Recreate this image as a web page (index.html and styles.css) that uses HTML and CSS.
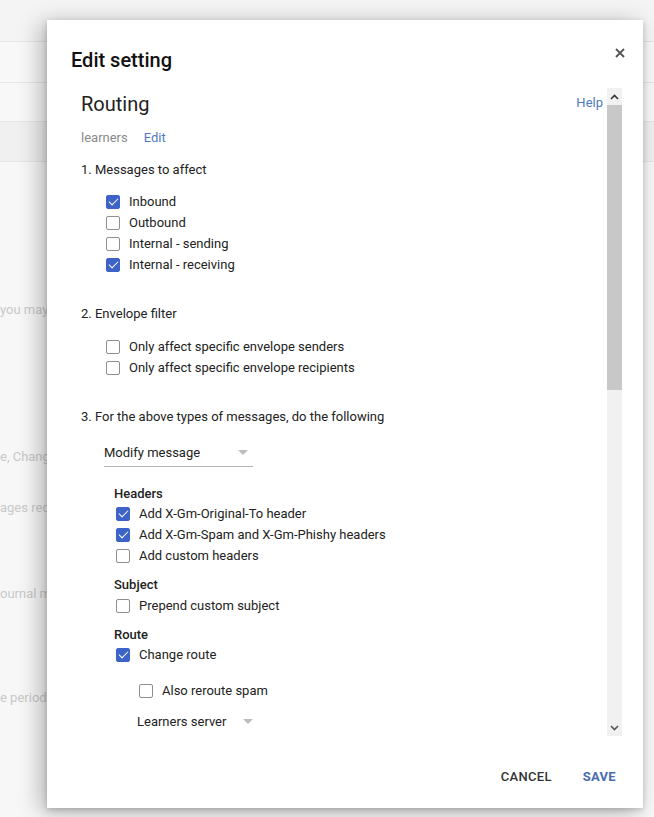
FILE: index.html
```html
<!DOCTYPE html>
<html>
<head>
<meta charset="utf-8">
<link rel="stylesheet" href="styles.css">
</head>
<body>
<div class="page">
  <div class="bg-row bg-top"></div>
  <div class="bg-row bg-line"></div>
  <div class="bg-row bg-line"></div>
  <div class="bg-row bg-band"></div>
  <div class="bg-text t1">you may</div>
  <div class="bg-text t2">e, Change</div>
  <div class="bg-text t3">ages rece</div>
  <div class="bg-text t4">ournal m</div>
  <div class="bg-text t5">e periodic</div>
</div>

<div class="dialog">
  <div class="dlg-head">
    <h1 class="dlg-title">Edit setting</h1>
    <svg class="close" width="10" height="10" viewBox="0 0 10 10"><path d="M1 1L9 9M9 1L1 9" stroke="#555" stroke-width="1.8"/></svg>
  </div>
  <div class="dlg-body">
    <div class="content">
      <div class="title-row">
        <h2 class="section-title">Routing</h2>
        <a class="link help">Help</a>
      </div>
      <div class="meta"><span class="muted">learners</span><a class="link">Edit</a></div>

      <div class="step s1">1. Messages to affect</div>
      <div class="checks c1">
        <label class="row"><span class="cb on"></span>Inbound</label>
        <label class="row"><span class="cb"></span>Outbound</label>
        <label class="row"><span class="cb"></span>Internal - sending</label>
        <label class="row"><span class="cb on"></span>Internal - receiving</label>
      </div>

      <div class="step s2">2. Envelope filter</div>
      <div class="checks c2">
        <label class="row"><span class="cb"></span>Only affect specific envelope senders</label>
        <label class="row"><span class="cb"></span>Only affect specific envelope recipients</label>
      </div>

      <div class="step s3">3. For the above types of messages, do the following</div>
      <div class="select modify"><span>Modify message</span><span class="caret"></span></div>

      <div class="sub">
        <div class="sub-h sh1">Headers</div>
        <label class="row"><span class="cb on"></span>Add X-Gm-Original-To header</label>
        <label class="row"><span class="cb on"></span>Add X-Gm-Spam and X-Gm-Phishy headers</label>
        <label class="row"><span class="cb"></span>Add custom headers</label>
        <div class="sub-h sh2">Subject</div>
        <label class="row"><span class="cb"></span>Prepend custom subject</label>
        <div class="sub-h sh2 sh-route">Route</div>
        <label class="row"><span class="cb on"></span>Change route</label>
        <label class="row nested"><span class="cb"></span>Also reroute spam</label>
        <div class="select server"><span>Learners server</span><span class="caret"></span></div>
      </div>
    </div>
    <div class="scrollbar">
      <div class="sb-btn"><svg width="9" height="6" viewBox="0 0 9 6"><path d="M1 5L4.5 1.5L8 5" fill="none" stroke="#333" stroke-width="1.6"/></svg></div>
      <div class="sb-thumb"></div>
      <div class="sb-track"></div>
      <div class="sb-btn"><svg width="9" height="6" viewBox="0 0 9 6"><path d="M1 1L4.5 4.5L8 1" fill="none" stroke="#555" stroke-width="1.6"/></svg></div>
    </div>
  </div>
  <div class="dlg-foot">
    <button class="btn cancel">CANCEL</button>
    <button class="btn save">SAVE</button>
  </div>
</div>
</body>
</html>
```

FILE: styles.css
```css
* { box-sizing: border-box; }
html, body { margin: 0; padding: 0; }
body {
  width: 654px;
  height: 817px;
  overflow: hidden;
  background: #f7f7f7;
  font-family: Roboto, "Liberation Sans", Arial, sans-serif;
  font-size: 13px;
  color: #222;
  position: relative;
}

/* background page */
.page { display: flex; flex-direction: column; }
.bg-row { border-bottom: 1px solid #e6e6e6; }
.bg-top { height: 42px; background: #f4f4f4; }
.bg-line { height: 41px; background: #f8f8f8; }
.bg-line + .bg-line { height: 39px; }
.bg-band { height: 40px; background: #f0f0f0; }
.bg-text {
  white-space: nowrap;
  color: #c9c9c9;
  font-size: 13px;
  line-height: 18px;
}
.t1 { margin-top: 139px; }
.t2 { margin-top: 129px; }
.t3 { margin-top: 33px; }
.t4 { margin-top: 68px; }
.t5 { margin-top: 86px; }

/* dialog */
.dialog {
  position: absolute;
  left: 47px;
  top: 20px;
  width: 596px;
  height: 788px;
  background: #fff;
  box-shadow: -6px 4px 22px rgba(0,0,0,0.28), 0 2px 6px rgba(0,0,0,0.18);
  display: flex;
  flex-direction: column;
}
.dlg-head {
  height: 68px;
  display: flex;
  justify-content: space-between;
  align-items: flex-start;
  padding: 28px 18px 0 24px;
}
.dlg-title {
  margin: 0;
  font-size: 20px;
  line-height: 24px;
  font-weight: 500;
  color: #111;
}

.dlg-body {
  flex: 0 0 648px;
  display: flex;
  margin: 0 21px 0 24px;
  overflow: hidden;
}
.content {
  flex: 1;
  padding: 4px 4px 0 10px;
  overflow: hidden;
}
.title-row {
  display: flex;
  justify-content: space-between;
  align-items: flex-start;
}
.section-title {
  margin: 0;
  font-size: 20px;
  line-height: 24px;
  font-weight: 400;
  color: #222;
}
.link { color: #4f7ac0; text-decoration: none; }
.help { font-size: 13px; line-height: 20px; margin-top: 1px; }
.meta { margin-top: 11px; line-height: 21px; display: flex; gap: 16px; }
.muted { color: #8a8a8a; }

.step { line-height: 21px; color: #222; }
.s1 { margin-top: 11px; }
.s2 { margin-top: 28px; }
.s3 { margin-top: 28px; }
.checks { padding-left: 25px; }
.c1 { margin-top: 11px; }
.c2 { margin-top: 12px; }

.row {
  display: flex;
  align-items: center;
  height: 21px;
  line-height: 21px;
  color: #222;
}
.cb {
  width: 14px;
  height: 14px;
  border: 1.5px solid #8e8e8e;
  border-radius: 2px;
  margin-right: 9px;
  flex: 0 0 14px;
  position: relative;
}
.cb.on {
  background: #3d63c8;
  border-color: #3d63c8;
}
.cb.on::after {
  content: "";
  position: absolute;
  left: 3.5px;
  top: 0.5px;
  width: 4px;
  height: 8px;
  border: solid #fff;
  border-width: 0 1.6px 1.6px 0;
  transform: rotate(45deg);
}

.select {
  display: flex;
  justify-content: space-between;
  align-items: center;
  line-height: 21px;
  color: #222;
}
.modify {
  margin: 15px 0 0 23px;
  width: 149px;
  padding-bottom: 3px;
  border-bottom: 1px solid #b5b5b5;
}
.caret {
  width: 0; height: 0;
  border-left: 5px solid transparent;
  border-right: 5px solid transparent;
  border-top: 5px solid #bdbdbd;
  margin-right: 5px;
}

.sub { padding-left: 33px; margin-top: 17px; }
.sub .row { padding-left: 2px; }
.sub-h { font-weight: 500; line-height: 20px; color: #222; }
.sh1 { margin-bottom: -1px; }
.sh2 { margin-top: 9px; }
.sh-route { margin-bottom: -1px; }
.nested { margin-top: 15px; padding-left: 25px !important; }
.server { margin: 10px 0 0 23px; width: 116px; }
.server .caret { margin-right: 0; }

.scrollbar {
  flex: 0 0 15px;
  display: flex;
  flex-direction: column;
  background: #f1f1f1;
}
.sb-btn {
  height: 17px;
  display: flex;
  align-items: center;
  justify-content: center;
  background: #f1f1f1;
}
.sb-thumb { height: 285px; background: #c8c8c8; }
.sb-track { flex: 1; }

.dlg-foot {
  flex: 1;
  display: flex;
  justify-content: flex-end;
  align-items: center;
  gap: 31px;
  padding: 8px 27px 0 0;
}
.btn {
  border: 0;
  background: none;
  padding: 0;
  font-family: Roboto, "Liberation Sans", Arial, sans-serif;
  font-size: 13px;
  font-weight: 500;
  letter-spacing: 0.3px;
}
.cancel { color: #333; }
.save { color: #4a6cb2; font-weight: 700; }
```
